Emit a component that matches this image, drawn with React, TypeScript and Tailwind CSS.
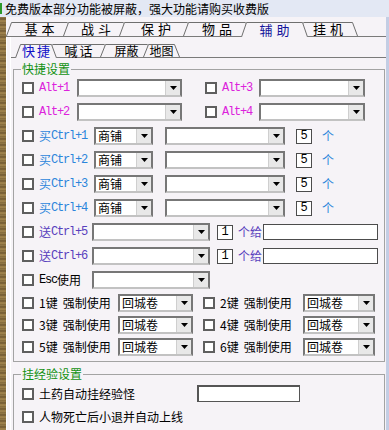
import React from "react"

const cjk = "font-['Noto_Sans_CJK_SC','Noto_Sans',sans-serif]"
const mono = "font-['Liberation_Mono','DejaVu_Sans_Mono',monospace]"
const panel = "#f6f3f7"

type TabDef = { t: string; w: number; cls: string; sel?: boolean; txt: string }

const row1: TabDef[] = [
  { t: "基本", w: 67, cls: "w-[67px] z-[1]", txt: "text-[13px] tracking-[4px] -mr-[4px]" },
  { t: "战斗", w: 66, cls: "w-[66px] z-[2]", txt: "text-[13px] tracking-[4px] -mr-[4px]" },
  { t: "保护", w: 74, cls: "w-[74px] z-[3]", txt: "text-[13px] tracking-[4px] -mr-[4px]" },
  { t: "物品", w: 68, cls: "w-[68px] z-[4]", txt: "text-[13px] tracking-[4px] -mr-[4px]" },
  { t: "辅助", w: 67, cls: "w-[67px] z-[10]", sel: true, txt: "text-[13px] tracking-[4px] -mr-[4px] text-[#14149a]" },
  { t: "挂机", w: 60, cls: "w-[60px] z-[5]", txt: "text-[13px] tracking-[4px] -mr-[4px]" },
]

const row2: TabDef[] = [
  { t: "快捷", w: 42, cls: "w-[42px] z-[10]", sel: true, txt: "text-[13px] tracking-[2px] -mr-[2px] text-[#1010c8]" },
  { t: "喊话", w: 63, cls: "w-[63px] z-[2]", txt: "text-[13px] tracking-[2px] -mr-[2px]" },
  { t: "屏蔽", w: 53, cls: "w-[53px] z-[3]", txt: "text-[12px]" },
  { t: "地图", w: 37, cls: "w-[37px] z-[4]", txt: "text-[12px]" },
]

function Tabs({ tabs, h, row }: { tabs: TabDef[]; h: number; row: string }) {
  return (
    <div className={`flex shrink-0 items-end border-b border-[#7a7a7a] ${row}`}>
      {tabs.map((tab, i) => {
        const th = tab.sel ? h + 1 : h
        return (
          <div
            key={tab.t}
            className={`relative flex shrink-0 items-center justify-center ${tab.cls} ${i > 0 ? "-ml-[10px]" : ""} ${tab.sel ? "-mb-[1px]" : ""}`}
            style={{ height: th }}
          >
            <svg className="absolute left-0 top-0" width={tab.w} height={th} viewBox={`0 0 ${tab.w} ${th}`}>
              <polygon points={`0,${th} 5,0 ${tab.w - 5},0 ${tab.w},${th}`} fill={panel} />
              <polyline
                points={`0.5,${th} 5.5,0.5 ${tab.w - 5.5},0.5 ${tab.w - 0.5},${th}`}
                fill="none"
                stroke="#6f6f6f"
              />
            </svg>
            <span className={`relative leading-[14px] ${tab.txt}`}>{tab.t}</span>
          </div>
        )
      })}
    </div>
  )
}

function Check() {
  return <span className="block h-[12px] w-[12px] shrink-0 border-2 border-[#5f5f5f] bg-white" />
}

function Combo({ cls, text }: { cls: string; text?: string }) {
  return (
    <div className={`flex h-[18px] shrink-0 border-2 border-[#777777] border-b-[#c2c2c2] bg-white ${cls}`}>
      <span className="flex-1 whitespace-nowrap pl-[2px] text-[12px] leading-[14px]">{text}</span>
      <span className="flex h-full w-[15px] shrink-0 items-center justify-center border-l border-[#cfcfcf] bg-[#e8e8e8]">
        <svg width="7" height="4" viewBox="0 0 7 4">
          <path d="M0 0h7L3.5 4z" fill="#000" />
        </svg>
      </span>
    </div>
  )
}

function Num({ n, cls }: { n: string; cls: string }) {
  return (
    <span className={`flex h-[15px] w-[16px] shrink-0 items-center justify-center border border-[#4c4c4c] bg-white text-[12px] leading-[13px] ${mono} ${cls}`}>
      {n}
    </span>
  )
}

function Row({ h, children }: { h: string; children: React.ReactNode }) {
  return <div className={`flex items-center pl-[8px] ${h}`}>{children}</div>
}

function AltRow({ a, b }: { a: string; b: string }) {
  return (
    <Row h="h-[24px]">
      <Check />
      <span className={`ml-[5px] w-[38px] shrink-0 text-[12px] tracking-[-1.2px] text-[#dc22dc] ${mono}`}>{a}</span>
      <Combo cls="w-[105px]" />
      <span className="ml-[23px]">
        <Check />
      </span>
      <span className={`ml-[5px] w-[37px] shrink-0 text-[12px] tracking-[-1.2px] text-[#dc22dc] ${mono}`}>{b}</span>
      <Combo cls="w-[106px]" />
    </Row>
  )
}

function BuyRow({ n }: { n: number }) {
  return (
    <Row h="h-[24px]">
      <Check />
      <span className="ml-[5px] flex w-[55px] shrink-0 items-center text-[12px] text-[#2b85db]">
        <span>买</span>
        <span className={`${mono} tracking-[-1.2px]`}>Ctrl+{n}</span>
      </span>
      <Combo cls="w-[59px]" text="商铺" />
      <Combo cls="ml-[12px] w-[120px]" />
      <Num n="5" cls="ml-[11px]" />
      <span className="ml-[10px] text-[12px] text-[#2b85db]">个</span>
    </Row>
  )
}

function SendRow({ n }: { n: number }) {
  return (
    <Row h="h-[24px]">
      <Check />
      <span className="ml-[5px] flex w-[53px] shrink-0 items-center text-[12px] text-[#5840bd]">
        <span>送</span>
        <span className={`${mono} tracking-[-1.2px]`}>Ctrl+{n}</span>
      </span>
      <Combo cls="w-[118px]" />
      <Num n="1" cls="ml-[7px]" />
      <span className="ml-[5px] w-[25px] shrink-0 text-[12px] text-[#5840bd]">个给</span>
      <span className="h-[16px] w-[115px] border border-[#4c4c4c] bg-white" />
    </Row>
  )
}

function KeyRow({ a, b }: { a: number; b: number }) {
  return (
    <Row h="h-[22px]">
      <Check />
      <span className="ml-[5px] w-[79px] shrink-0 whitespace-nowrap text-[12px]">
        {a}键<span className="ml-[5px]">强制使用</span>
      </span>
      <Combo cls="w-[75px]" text="回城卷" />
      <span className="ml-[10px]">
        <Check />
      </span>
      <span className="ml-[5px] w-[83px] shrink-0 whitespace-nowrap text-[12px]">
        {b}键<span className="ml-[5px]">强制使用</span>
      </span>
      <Combo cls="w-[72px]" text="回城卷" />
    </Row>
  )
}

export default function App() {
  return (
    <div className={`h-[430px] w-[389px] overflow-hidden bg-[#f6f3f7] text-black ${cjk}`}>
      <div className="relative flex h-[17px] items-center bg-[#e3e8f4] pl-[5px] text-[12px] leading-[17px]">
        <span className="absolute left-0 top-[3px] h-[11px] w-[2px] bg-[#2c9a2c]" />
        免费版本部分功能被屏蔽，强大功能请购买收费版
      </div>
      <div className="flex h-[413px]">
        <div className="w-[6px] shrink-0 bg-[repeating-linear-gradient(180deg,#9a7f4c_0px,#6e5630_2px,#a88a52_4px,#7d6438_6px)]" />
        <div className="flex flex-1 flex-col bg-[#f6f3f7]">
          <Tabs tabs={row1} h={14} row="h-[20px]" />
          <div className="min-h-0 flex-1 border-l border-white">
            <div className="ml-[3px] h-full border-l border-white">
              <Tabs tabs={row2} h={13} row="h-[21px] pl-[4px]" />
              <fieldset className="ml-[2px] mr-[1px] mt-[4px] border border-[#a3a3a3] pb-[3px]">
                <legend className="ml-[7px] px-[1px] text-[12px] leading-[14px] text-[#119111]">快捷设置</legend>
                <AltRow a="Alt+1" b="Alt+3" />
                <AltRow a="Alt+2" b="Alt+4" />
                <BuyRow n={1} />
                <BuyRow n={2} />
                <BuyRow n={3} />
                <BuyRow n={4} />
                <SendRow n={5} />
                <SendRow n={6} />
                <Row h="h-[24px]">
                  <Check />
                  <span className="ml-[5px] flex w-[53px] shrink-0 items-center text-[12px]">
                    <span className={`${mono} tracking-[-1.2px]`}>Esc</span>
                    <span>使用</span>
                  </span>
                  <Combo cls="w-[118px]" />
                </Row>
                <KeyRow a={1} b={2} />
                <KeyRow a={3} b={4} />
                <KeyRow a={5} b={6} />
              </fieldset>
              <fieldset className="ml-[2px] mr-[1px] mt-[5px] h-[80px] border border-[#a3a3a3] pt-[1px]">
                <legend className="ml-[7px] px-[1px] text-[12px] leading-[14px] text-[#119111]">挂经验设置</legend>
                <Row h="h-[23px]">
                  <Check />
                  <span className="ml-[5px] w-[158px] shrink-0 text-[12px]">土药自动挂经验怪</span>
                  <span className="h-[17px] w-[103px] border border-[#555555] border-l-2 border-t-2 bg-white" />
                </Row>
                <Row h="h-[23px]">
                  <Check />
                  <span className="ml-[5px] text-[12px]">人物死亡后小退并自动上线</span>
                </Row>
              </fieldset>
            </div>
          </div>
        </div>
        <div className="w-[3px] shrink-0 bg-[#c3cde4]" />
      </div>
    </div>
  )
}
